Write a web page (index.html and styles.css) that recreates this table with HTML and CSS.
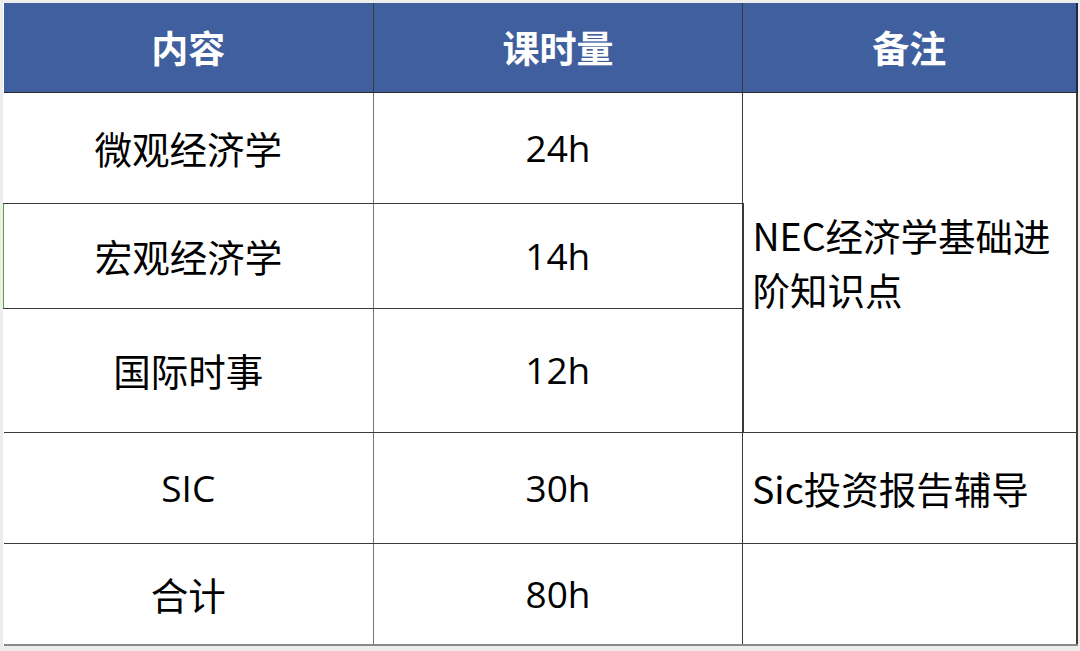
FILE: index.html
```html
<!DOCTYPE html>
<html lang="zh-CN">
<head>
<meta charset="utf-8">
<title>课程安排</title>
<link rel="stylesheet" href="styles.css">
</head>
<body>
<div class="frame">
<table class="schedule">
  <colgroup>
    <col class="c1">
    <col class="c2">
    <col class="c3">
  </colgroup>
  <thead>
    <tr class="head">
      <th>内容</th>
      <th>课时量</th>
      <th>备注</th>
    </tr>
  </thead>
  <tbody>
    <tr class="r1">
      <td>微观经济学</td>
      <td class="num">24h</td>
      <td class="note" rowspan="3">NEC经济学基础进<br>阶知识点</td>
    </tr>
    <tr class="r2">
      <td class="green">宏观经济学</td>
      <td class="num">14h</td>
    </tr>
    <tr class="r3">
      <td>国际时事</td>
      <td class="num">12h</td>
    </tr>
    <tr class="r4">
      <td class="num">SIC</td>
      <td class="num">30h</td>
      <td class="note">Sic投资报告辅导</td>
    </tr>
    <tr class="r5">
      <td>合计</td>
      <td class="num">80h</td>
      <td class="note"></td>
    </tr>
  </tbody>
</table>
</div>
</body>
</html>
```
FILE: styles.css
```css
html, body {
  margin: 0;
  padding: 0;
  background: #ededed;
}
.frame {
  padding: 3px 4px 0 3px;
  width: 1073px;
}
.schedule {
  border-collapse: collapse;
  table-layout: fixed;
  width: 1073px;
  background: #ffffff;
  font-family: "Noto Sans CJK SC", "Noto Sans", sans-serif;
  font-size: 37.5px;
  color: #000000;
}
.c1 { width: 370px; }
.c2 { width: 369px; }
.c3 { width: 334px; }
.schedule th,
.schedule td {
  border: 1px solid #3a3a3a;
  text-align: center;
  vertical-align: middle;
  padding: 0;
  font-weight: 400;
  line-height: 54px;
}
.schedule th {
  background: #405f9e;
  color: #ffffff;
  font-weight: 700;
  font-size: 37px;
  border-top: none;
  border-bottom: 1px solid #2c2c2c;
}
.schedule th:first-child { border-left: none; }
.schedule th:last-child { border-right: 2px solid #1e2a45; }
.schedule td:first-child { border-left: none; border-right-color: #777; }
.schedule td:last-child { border-right: 2px solid #3a3a3a; }
.num {
  font-family: "Open Sans", "Noto Sans CJK SC", sans-serif;
  font-size: 37px;
}
.note {
  text-align: left !important;
  padding-left: 9px !important;
}
.schedule td.green { border-left: 1px solid #4ea832; }
.head { height: 89px; }
.r1 { height: 111px; }
.r2 { height: 105px; }
.r3 { height: 124px; }
.r4 { height: 111px; }
.r5 { height: 102px; }
.r5 td { border-bottom: 2px solid #8a8a8a; }
```
